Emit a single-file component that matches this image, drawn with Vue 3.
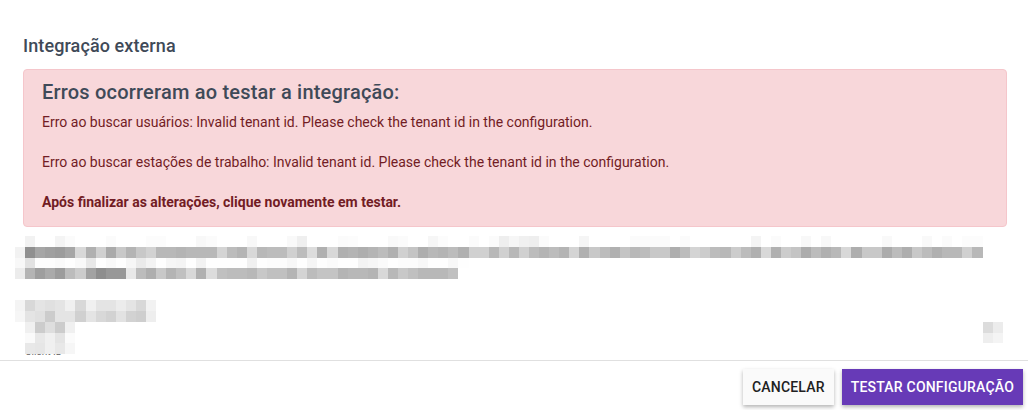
<template>
    <div class="page">
        <div class="content">
            <h2 class="title">Integração externa</h2>
            <div class="alert">
                <h4 class="alert-title">Erros ocorreram ao testar a integração:</h4>
                <p class="alert-line">Erro ao buscar usuários: Invalid tenant id. Please check the tenant id in the configuration.</p>
                <p class="alert-line">Erro ao buscar estações de trabalho: Invalid tenant id. Please check the tenant id in the configuration.</p>
                <p class="alert-line alert-strong">Após finalizar as alterações, clique novamente em testar.</p>
            </div>
            <div class="mosaic description">
                <div v-for="(row, i) in descriptionRows" :key="i" class="mosaic-row">
                    <span v-for="(cell, j) in row" :key="j" class="cell" :style="{ background: cell }"></span>
                </div>
            </div>
            <div class="mosaic field">
                <div v-for="(row, i) in fieldRows" :key="i" class="mosaic-row">
                    <span v-for="(cell, j) in row" :key="j" class="cell" :style="{ background: cell }"></span>
                </div>
            </div>
            <label class="field-label">Client ID</label>
        </div>
        <div class="footer">
            <button class="btn btn-cancel">CANCELAR</button>
            <button class="btn btn-primary">TESTAR CONFIGURAÇÃO</button>
        </div>
    </div>
</template>

<script setup>
const parse = (text) => text.trim().split(/\s+/).map((v) => `#${v}${v}${v}`);
const gap = (n) => Array(n).fill('#fff');

const descriptionRows = [
    'ff f2 ff ff f4 fb ff ff ff fb ff ff ff fc fc ff ff ff f8 fb ff ff ff f8 ff ff ff f9 ef ff ff ff fb fc ff ff ff f9 fb ff ff f6 fc ff ff fb ff fb ee f6 f0 ee fb ff ff ff f5 ff ff ff ff fb fb fb fb ff fb ff ff ff ff ff ff f4 ff fb ff ff f8 ff f8 ff ff ff ff ff f9 ff ff ff f9 ff fb ff fc fc',
    'f2 90 a6 a0 9c a6 d8 b0 d0 aa c8 b4 c8 d2 b8 b8 b4 b8 b8 b8 d4 bc b4 d8 b8 bc bc d0 bc dc b0 d8 b0 b4 ae b4 bc b0 d0 c4 ae b8 b4 bc b0 d0 d0 b8 d0 b8 d0 bc b4 bc b4 d4 b0 c8 bc b0 c4 b8 bc c8 c8 ae bc d4 cc bc b8 cc bc b0 d8 b0 cc c4 ac bc b0 b8 d8 ae c8 c8 ac bc ae c8 bc b0 b8 b8 d0 b8',
    'f8 e2 fd fd fa fe f9 e8 fe f9 fe f6 ea f3 fe f6 f4 fe f2 fe fe fe fe f0 fe fc fc f7 fe f5 fe fb fe fe f3 f6 fa fe fc fc f8 fe fe f8 fe',
    'ec b4 9e aa 9c bc cc a2 8e 98 98 e8 bc ae c8 b4 c0 d8 b0 dc c0 bc bc b8 c8 c0 c0 b4 d4 bc c4 c4 b4 b8 b8 b4 d8 b8 c8 c0 b8 b8 b8 c0'
].map(parse);

// the two cells at the far right belong to a field further down the form
const fieldRows = [
    parse('f4 d8 e4 e0 e4 f0 d8 f0 e4 e4 ec e4 d8 f2'),
    parse('f6 e4 e0 cc e4 e4 d0 e4 d8 d2 e2 d2 ce ee'),
    [...parse('ff f0 cc de cc f0'), ...gap(90), ...parse('dc ec')],
    [...parse('ff fa e8 f0 e4 fb'), ...gap(90), ...parse('ee f4')],
    parse('ff e8 e6 f0 e8 f6')
];
</script>

<style scoped>
.page {
    width: 1028px;
    height: 410px;
    display: flex;
    flex-direction: column;
    background: #fff;
    font-family: Roboto, "Liberation Sans", sans-serif;
    overflow: hidden;
}

.content {
    height: 360px;
    padding: 35px 21px 0 23px;
    box-sizing: border-box;
    overflow: hidden;
}

.title {
    margin: 0 0 13px;
    font-size: 18px;
    line-height: 21px;
    font-weight: 500;
    color: #3f4a58;
    letter-spacing: 0.1px;
}

.alert {
    padding: 10px 18px 14px;
    background: #f8d7da;
    border: 1px solid #f5c6cb;
    border-radius: 4px;
    color: #721c24;
}

.alert-title {
    margin: 0 0 8px;
    font-size: 20px;
    line-height: 24px;
    font-weight: 500;
    color: #3f4a58;
    letter-spacing: 0.2px;
}

.alert-line {
    margin: 0 0 20px;
    font-size: 14px;
    line-height: 20px;
}

.alert-line:last-child {
    margin-bottom: 0;
}

.alert-strong {
    font-weight: 700;
}

.mosaic {
    margin-left: -8px;
    position: relative;
    z-index: 1;
}

.description {
    margin-top: 9px;
}

.field {
    margin-top: 21px;
}

.mosaic-row {
    display: flex;
    height: 10.8px;
}

.cell {
    flex: none;
    width: 10.08px;
    height: 100%;
}

.field-label {
    display: block;
    margin: -8px 0 0 2px;
    font-size: 10px;
    line-height: 12px;
    color: #666;
}

.footer {
    flex: 1;
    display: flex;
    justify-content: flex-end;
    align-items: flex-start;
    gap: 8px;
    padding: 8px 5px 0 0;
    border-top: 1px solid #e0e0e0;
}

.btn {
    height: 36px;
    padding: 0 9px;
    border: none;
    border-radius: 0;
    font-family: inherit;
    font-size: 14px;
    font-weight: 500;
    letter-spacing: 0.2px;
    box-shadow: 0 2px 4px rgba(0, 0, 0, 0.3);
    cursor: pointer;
}

.btn-cancel {
    background: #fafafa;
    color: #212121;
}

.btn-primary {
    background: #673ab7;
    color: #fff;
}
</style>

<style>
html, body {
    margin: 0;
    background: #fff;
}
</style>
